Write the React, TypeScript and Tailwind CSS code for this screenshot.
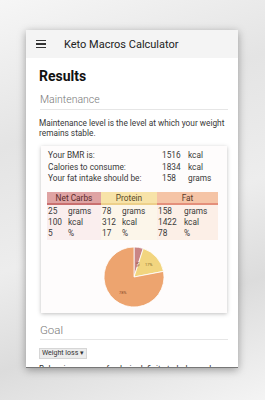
import React from "react";

const font = { fontFamily: "Roboto, 'Noto Sans', sans-serif" };

function Pie() {
  return (
    <svg width="62" height="62" viewBox="-1 -1 62 62">
      <path d="M30 30 L30 0 A30 30 0 0 1 39.27 1.47 Z" fill="#c98585" stroke="#fff" strokeWidth="0.8" />
      <path d="M30 30 L39.27 1.47 A30 30 0 0 1 59.47 24.38 Z" fill="#f2d57f" stroke="#fff" strokeWidth="0.8" />
      <path d="M30 30 L59.47 24.38 A30 30 0 1 1 30 0 Z" fill="#eda46f" stroke="#fff" strokeWidth="0.8" />
      <text x="32" y="15" fontSize="4" fill="#8a4a3a" fontFamily="Roboto, sans-serif" transform="rotate(80 32 15)">5%</text>
      <text x="41" y="18.5" fontSize="4" fill="#8a6a2a" fontFamily="Roboto, sans-serif">17%</text>
      <text x="15" y="46.5" fontSize="4" fill="#8a4a2a" fontFamily="Roboto, sans-serif">78%</text>
    </svg>
  );
}

export default function App() {
  const rows = [
    ["25", "grams", "78", "grams", "158", "grams"],
    ["100", "kcal", "312", "kcal", "1422", "kcal"],
    ["5", "%", "17", "%", "78", "%"],
  ];
  return (
    <div
      className="w-[265px] h-[400px] overflow-hidden pt-[30px] pl-[26px] bg-[linear-gradient(160deg,#f6f6f6_0%,#e4e4e4_30%,#ededed_55%,#dcdcdc_75%,#f4f4f4_100%)]"
      style={font}
    >
      <div className="w-[212px] h-[338px] overflow-hidden bg-white shadow-[0_2px_8px_rgba(0,0,0,0.35)] border-b border-[#777] flex flex-col">
        <div className="h-[28px] shrink-0 bg-[#f4f4f4] flex items-center">
          <div className="ml-[10px] w-[10px] flex flex-col gap-[2px]">
            <div className="h-[1.5px] bg-[#333]" />
            <div className="h-[1.5px] bg-[#333]" />
            <div className="h-[1.5px] bg-[#333]" />
          </div>
          <div className="ml-[18px] text-[11px] text-[#222] leading-none">Keto Macros Calculator</div>
        </div>
        <div className="pl-[13px] pr-[10px] flex flex-col">
          <div className="mt-[10px] text-[14px] font-bold text-[#111] leading-[16px]">Results</div>
          <div className="mt-[9px] ml-px text-[10.5px] text-[#777] font-light leading-[13px] pb-[3px] border-b border-[#e6e6e6]">Maintenance</div>
          <div className="mt-[8px] text-[8.3px] text-[#383838] leading-[10px]">
            Maintenance level is the level at which your weight remains stable.
          </div>
          <div className="mt-[8px] ml-[2px] w-[186px] h-[167px] shadow-[0_1px_4px_rgba(0,0,0,0.25)] bg-[#fefcfc] pt-[4px] px-[6px] flex flex-col">
            <div className="text-[8.3px] text-[#3a3a3a] leading-[11.5px]">
              {[
                ["Your BMR is:", "1516", "kcal"],
                ["Calories to consume:", "1834", "kcal"],
                ["Your fat intake should be:", "158", "grams"],
              ].map((r) => (
                <div key={r[0]} className="flex">
                  <span className="w-[115px] pl-px">{r[0]}</span>
                  <span className="w-[26px]">{r[1]}</span>
                  <span>{r[2]}</span>
                </div>
              ))}
            </div>
            <div className="mt-[7px] grid grid-cols-[54px_56px_61px] text-[8.3px] text-[#3a3a3a]">
              <div className="h-[13px] bg-[#dfa3a3] border-b-2 border-[#c96f6f] text-center leading-[12px] text-[#5a2a2a]">Net Carbs</div>
              <div className="h-[13px] bg-[#f7e3a8] border-b-2 border-[#edd08a] text-center leading-[12px] text-[#5a4a2a]">Protein</div>
              <div className="h-[13px] bg-[#f5c4a6] border-b-2 border-[#e48f7a] text-center leading-[12px] text-[#5a3a2a]">Fat</div>
              {[0, 1, 2].map((c) => (
                <div
                  key={c}
                  className={
                    "flex flex-col leading-[11px] py-[1px] " +
                    (c === 0 ? "bg-[#faeeee]" : c === 1 ? "bg-[#fcf6ea]" : "bg-[#fcefe7]")
                  }
                >
                  {rows.map((r, i) => (
                    <div key={i} className="flex">
                      <span className={c === 2 ? "w-[27px] pl-px" : "w-[21px] pl-px"}>{r[c * 2]}</span>
                      <span>{r[c * 2 + 1]}</span>
                    </div>
                  ))}
                </div>
              ))}
            </div>
            <div className="mt-[6px] flex justify-center">
              <Pie />
            </div>
          </div>
          <div className="mt-[10px] ml-px text-[11.5px] text-[#777] font-light leading-[14px] pb-[2px] border-b border-[#e6e6e6]">Goal</div>
          <div className="mt-[8px] self-start bg-[#ececec] border border-[#d6d6d6] text-[7px] text-[#333] leading-[9px] px-[2px]">
            Weight loss ▾
          </div>
          <div className="mt-[5px] text-[8.3px] text-[#333] leading-[10px] whitespace-nowrap">
            Below is a range of caloric deficits to help you lose
          </div>
        </div>
      </div>
    </div>
  );
}
